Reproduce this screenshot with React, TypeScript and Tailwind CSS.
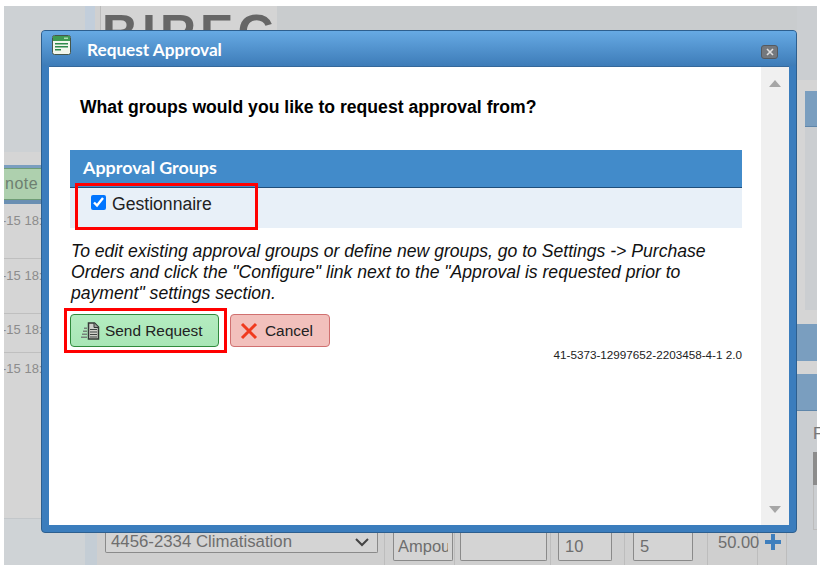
import React from 'react';

const sans = "font-['Liberation_Sans',Arial,sans-serif]";
const titleFont = "font-['Lato','Open_Sans',sans-serif]";
const field = 'h-[28px] rounded-b-[2px] border border-t-0 border-[#8a8a8a] bg-[#d4d4d4] text-[#6e6e6e]';

const timeRows = [
  { label: '-15 18:50', height: 'h-[55px]', top: 'pt-[9px]' },
  { label: '-15 18:49', height: 'h-[55px]', top: 'pt-[9px]' },
  { label: '-15 18:48', height: 'h-[39px]', top: 'pt-[8px]' },
  { label: '-15 18:47', height: 'h-[165px]', top: 'pt-[8px]' },
];

function WindowIcon() {
  return (
    <svg width="19" height="20" viewBox="0 0 19 20">
      <rect x="0.5" y="0.5" width="18" height="19" rx="2" fill="#f1f6ec" stroke="#46564a" />
      <rect x="1" y="1" width="17" height="5" fill="#3f9a52" />
      <rect x="12" y="2.500" width="4" height="1.500" fill="#a9dcae" />
      <rect x="3" y="8" width="13" height="1.500" fill="#2f8a4a" />
      <rect x="3" y="11" width="13" height="1.500" fill="#2f8a4a" />
      <rect x="3" y="14" width="6" height="1.500" fill="#2f8a4a" />
    </svg>
  );
}

function SendIcon() {
  return (
    <svg width="20" height="18" viewBox="0 0 20 18">
      <path d="M1 14.500h6V16H1zM2 11.500h5V13H2zM3 8.500h4V10H3zM4 5.500h3V7H4z" fill="#76827a" />
      <path d="M8.500 1h6l4 4v12h-10z" fill="#cfcfca" stroke="#333835" strokeWidth="1.500" />
      <path d="M14 1v4.500h4.500" fill="#9c9c98" stroke="#333835" />
      <path d="M10 7.500h7M10 10h7M10 12.500h7M10 15h7" stroke="#3f4442" strokeWidth="1.200" />
    </svg>
  );
}

function Triangle({ down }: { down?: boolean }) {
  return (
    <svg width="12" height="7" viewBox="0 0 12 7" fill="#a6a6a6">
      <path d={down ? 'M0 0h12L6 7z' : 'M6 0l6 7H0z'} />
    </svg>
  );
}

function ItemRow() {
  return (
    <div className="flex h-[32px] bg-[#cfcfcf] text-[16.500px]">
      <div className="w-[12px] bg-[#c4cdd5]" />
      <div className="w-[288px] border-r border-[#bdbdbd] pl-[8px]">
        <div className="flex h-[20px] w-[273px] items-center justify-between rounded-b-[2px] border border-t-0 border-[#8a8a8a] bg-[#d4d4d4] pl-[5px] pr-[8px] text-[#6e6e6e]">
          <span className="-mt-[1px] text-[16.800px]">4456-2334 Climatisation</span>
          <svg width="14" height="9" viewBox="0 0 14 9" fill="none" stroke="#444" strokeWidth="2">
            <path d="M1 1l6 6 6-6" />
          </svg>
        </div>
      </div>
      <div className="w-[70px] border-r border-[#bdbdbd] pl-[8px]">
        <div className={`${field} flex w-[60px] items-center pl-[4px]`}>
          <span className="w-[50px] overflow-hidden whitespace-nowrap">Ampoule</span>
        </div>
      </div>
      <div className="w-[96px] border-r border-[#bdbdbd] pl-[5px]">
        <div className={`${field} w-[87px]`} />
      </div>
      <div className="w-[74px] border-r border-[#bdbdbd] pl-[7px]">
        <div className={`${field} flex w-[54px] items-center pl-[6px]`}>10</div>
      </div>
      <div className="w-[83px] border-r border-[#bdbdbd] pl-[8px]">
        <div className={`${field} flex w-[60px] items-center pl-[6px]`}>5</div>
      </div>
      <div className="w-[50px] border-r border-[#bdbdbd] pl-[10px] leading-[18px] text-[#6e6e6e]">50.00</div>
      <div className="w-[29px] border-r border-[#bdbdbd] pl-[7px] pt-[1px]">
        <svg width="16" height="16" viewBox="0 0 16 16" fill="#3f7fbd">
          <path d="M6 0h4v6h6v4h-6v6H6v-6H0V6h6z" />
        </svg>
      </div>
      <div className="flex-1 bg-[#cbced1]" />
    </div>
  );
}

function Backdrop() {
  return (
    <div className={`flex h-full w-full bg-[#cbced1] text-[#777] ${sans}`}>
      {/* Left column behind the dialog */}
      <div className="flex w-[81px] shrink-0 flex-col">
        <div className="h-[146px] bg-[#cdd1d4]" />
        <div className="h-[13px] bg-[#d5d5d5]" />
        <div className="h-[3px] bg-[#7a9ebf]" />
        <div className="flex h-[32px] items-center border-y border-[#6f9d75] bg-[#aed0ae] pl-[1px] text-[16px] tracking-[0.5px] text-[#6d7f70]">
          note
        </div>
        <div className="h-[4px] bg-[#6a8fb2]" />
        <div className="overflow-hidden bg-[#d5d5d5]">
          {timeRows.map(row => (
            <div
              key={row.label}
              className={`${row.height} ${row.top} -ml-[2px] whitespace-nowrap border-b border-[#bfbfbf] text-[13px] leading-[16px] text-[#8c8c8c] last:border-b-0`}
            >
              {row.label}
            </div>
          ))}
        </div>
        <div className="flex-1 border-t border-[#c3c7ca] bg-[#cfd3d6]" />
      </div>

      {/* Middle column: logo on top, item row at the bottom */}
      <div className="flex min-w-0 flex-1 flex-col justify-between">
        <div className="flex h-[60px] bg-[#c9ccce]">
          <div className="w-[10px] bg-[#c2cedb]" />
          <div className="w-[5px] bg-[#d0d0d0]" />
          <div className="w-[177px] overflow-hidden whitespace-nowrap border-l border-[#bbb] bg-[#d4d4d4] pl-[1px] pt-[6px] text-[50px] font-bold leading-[42px] tracking-[4px] text-[#666]">
            BIREC
          </div>
        </div>
        <ItemRow />
      </div>

      {/* Right column behind the dialog */}
      <div className="flex w-[20px] shrink-0 flex-col">
        <div className="h-[74px]" />
        <div className="flex h-[244px] flex-col bg-[#d5d5d5] pl-[8px] pt-[11px]">
          <div className="h-[36px] border-b border-[#5f86aa] bg-[#7a9ebf]" />
          <div className="h-[183px] bg-[#cbced1]" />
        </div>
        <div className="h-[37px] bg-[#7a9ebf]" />
        <div className="h-[13px] bg-[#d5d5d5]" />
        <div className="h-[37px] border-b border-[#5f86aa] bg-[#7a9ebf]" />
        <div className="pl-[16px] pt-[14px] text-[16px] leading-[18px]">F</div>
        <div className="ml-[16px] mt-[9px] h-[33px] bg-[#8c8c8c]" />
        <div className="ml-[16px] h-[45px] border-b border-l border-[#bcbcbc]" />
      </div>
    </div>
  );
}

function Dialog() {
  return (
    <div className={`absolute left-[41px] top-[30px] flex h-[503px] w-[756px] flex-col rounded-[4px] border border-[#2d5f8f] bg-[#3b7dbd] px-[7px] pb-[7px] ${sans}`}>
      {/* Title bar */}
      <div className="-mx-[7px] flex h-[35px] shrink-0 items-center rounded-t-[3px] bg-gradient-to-b from-[#67aae4] to-[#3d7cb8] pl-[10px] pr-[18px]">
        <div className="mb-[7px]">
          <WindowIcon />
        </div>
        <span className={`ml-[16px] mt-[3px] text-[17.200px] font-bold text-white ${titleFont}`}>Request Approval</span>
        <button className="ml-auto mt-[7px] flex h-[14px] w-[17px] items-center justify-center rounded-[3px] border border-[#55595e] bg-[#74787d]">
          <svg width="8" height="8" viewBox="0 0 8 8" stroke="#e0e0e0" strokeWidth="1.600">
            <path d="M1 1l6 6M7 1L1 7" />
          </svg>
        </button>
      </div>

      {/* Content + scrollbar */}
      <div className="flex min-h-0 flex-1 border-t border-[#35689a] bg-white">
        <div className="relative flex-1 pl-[21px] pr-[19px]">
          <h2 className="ml-[10px] mt-[30px] text-[17.600px] font-bold leading-[20px] text-black">
            What groups would you like to request approval from?
          </h2>
          <div className={`mt-[33px] flex h-[38px] items-center border-b border-[#1f4e7a] bg-[#428bca] pb-[3px] pl-[13px] text-[17.900px] font-bold text-white ${titleFont}`}>
            Approval Groups
          </div>
          <div className="flex h-[40px] items-center gap-[6px] bg-[#e8f0f8] pb-[7px] pl-[21px] text-[17.600px] text-[#222]">
            <input type="checkbox" defaultChecked className="mb-[4px] h-[15px] w-[15px] accent-[#0075ff]" />
            <span>Gestionnaire</span>
          </div>
          <p className="mt-[13px] pl-[1px] text-[17.600px] italic leading-[21px] text-[#111]">
            To edit existing approval groups or define new groups, go to Settings -&gt; Purchase
            <br />
            Orders and click the "Configure" link next to the "Approval is requested prior to
            <br />
            payment" settings section.
          </p>
          <div className="mt-[10px] flex gap-[11px]">
            <button className="flex h-[33px] w-[149px] items-center gap-[5px] rounded-[4px] border border-[#2f8a3c] bg-gradient-to-b from-[#b4ecc0] to-[#a8e6b6] pl-[9px] text-[15.400px] text-[#222]">
              <SendIcon />
              <span>Send Request</span>
            </button>
            <button className="flex h-[33px] w-[100px] items-center gap-[7px] rounded-[4px] border border-[#d07070] bg-[#f2c0bc] pl-[9px] text-[15.400px] text-[#222]">
              <svg width="18" height="18" viewBox="0 0 18 18" stroke="#f03a1e" strokeWidth="3">
                <path d="M2 2l14 14M16 2L2 16" />
              </svg>
              <span>Cancel</span>
            </button>
          </div>
          <div className="mt-[1px] text-right text-[11.700px] leading-[14px] text-[#222]">41-5373-12997652-2203458-4-1 2.0</div>

          {/* Red annotations drawn over the screenshot */}
          <div className="absolute left-[26px] top-[116px] h-[47px] w-[183px] border-[3px] border-[#f00]" />
          <div className="absolute left-[15px] top-[241px] h-[45px] w-[163px] border-[3px] border-[#f00]" />
        </div>
        <div className="flex w-[28px] shrink-0 flex-col items-center justify-between bg-[#f0f0f0] pb-[12px] pt-[13px]">
          <Triangle />
          <Triangle down />
        </div>
      </div>
    </div>
  );
}

export default function App() {
  return (
    <div className="relative h-[568px] w-[820px] overflow-hidden bg-white pb-[3px] pl-[4px] pr-[3px] pt-[6px]">
      <Backdrop />
      <Dialog />
    </div>
  );
}
